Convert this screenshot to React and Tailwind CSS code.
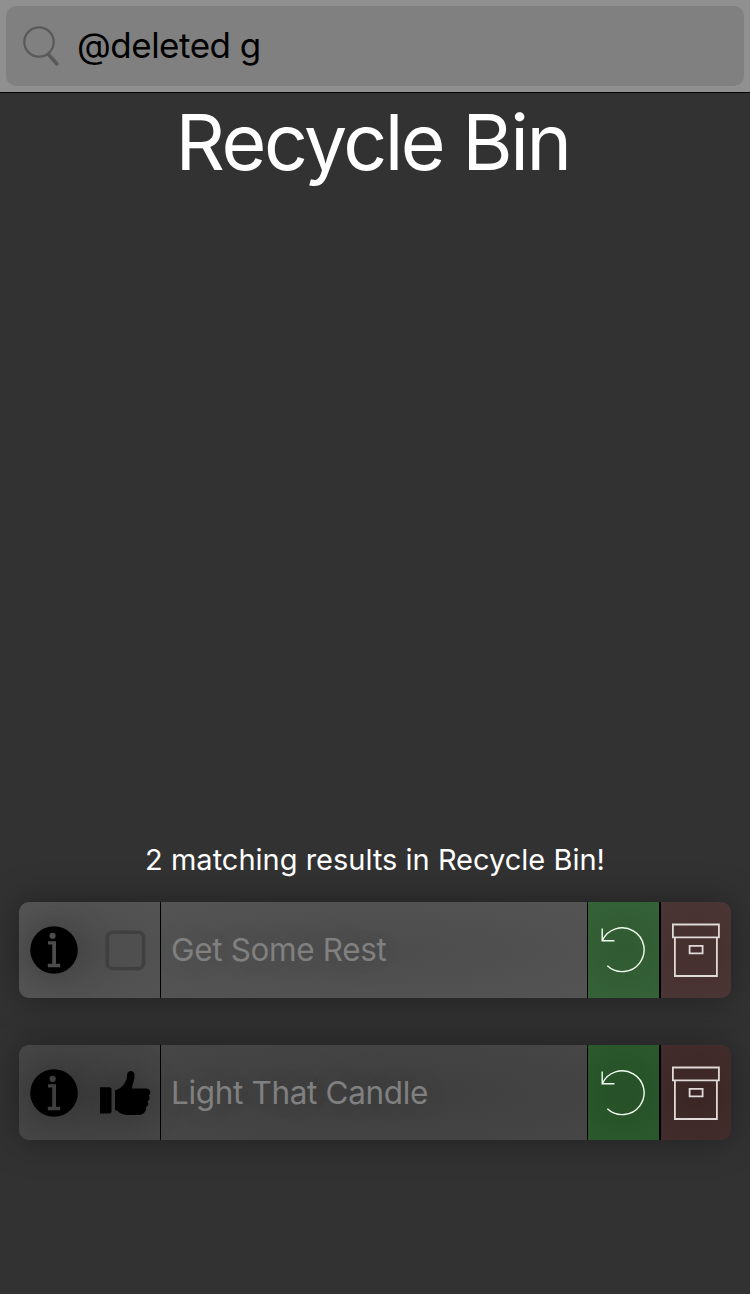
import React from "react";

function SearchIcon() {
  return (
    <svg width="40" height="44" viewBox="0 0 40 44" fill="none" stroke="#595959" strokeLinecap="round">
      <circle cx="17" cy="18" r="14.7" strokeWidth="2.2" />
      <path d="M26.500 30.500 35 40" strokeWidth="3.4" />
    </svg>
  );
}

function InfoIcon({ fill }) {
  return (
    <svg width="50" height="50" viewBox="0 0 50 50" className="shrink-0 drop-shadow-[0_0_16px_rgba(0,0,0,0.25)]">
      <circle cx="25" cy="25" r="23.8" fill="#000" />
      <circle cx="23.6" cy="10.800" r="3.100" fill={fill} />
      <path d="M19 16.300H27v22.500h4.200v3.500H18.800v-3.500h4.400V19.500H19z" fill={fill} />
    </svg>
  );
}

function CheckboxIcon() {
  return (
    <svg width="42" height="42" viewBox="0 0 42 42" fill="none">
      <rect x="3.200" y="3.200" width="36.400" height="36.400" rx="5.500" stroke="#404040" strokeWidth="3.6" />
    </svg>
  );
}

function ThumbIcon() {
  return (
    <svg width="52" height="46" viewBox="0 0 52 46" className="drop-shadow-[0_0_16px_rgba(0,0,0,0.25)]">
      <path d="M1 17.2h9.5q2 0 2 2v22.3q0 2-2 2H1z" fill="#000" />
      <path
        d="M16 20.2c4.500-1 7-3.200 9.200-6.400 2.200-3.300 2.800-5.200 2.900-9.500C28.200 2.300 29.800 1 31.600 1c2.300 0 4 1.700 4 4.100 0 5.300-2.200 8.700-2.600 13.500h14c2.700 0 4.300 1.500 4.300 3.700 0 1.700-.7 2.700-1.700 3.200 1 .8 1.100 1.700.8 3.200-.3 1.500-1 2.200-2 2.700.9.900 1 1.800.7 3.200-.4 1.600-1.200 2.300-2.300 2.700.5.800.4 1.700-.1 3-1 2.700-3 4.600-6.700 4.600H27.500c-4 0-6.500-1.500-8.500-3.600-.8-.8-1.800-1.200-3-1.400z"
        fill="#000"
      />
    </svg>
  );
}

function RestoreIcon() {
  return (
    <svg width="46" height="48" viewBox="0 0 46 48" fill="none" stroke="#f2fff2" strokeWidth="1.4">
      <path d="M2.200 2.600V14.800H14.400M2.200 14.800A21.900 21.900 0 1 1 7.300 39.800" />
    </svg>
  );
}

function ArchiveIcon() {
  return (
    <svg width="50" height="56" viewBox="0 0 50 56" fill="none" stroke="#dfd9d8" strokeWidth="1.8">
      <path d="M1.900 2.500H47.900V15.300H1.900zM3.900 15.300H45.900V54H3.900zM18.600 23.800H31.600V31.300H18.600z" />
    </svg>
  );
}

function ResultRow({ title, done }) {
  const surface = done
    ? "bg-[radial-gradient(ellipse_at_center,#3e3e3e,#464646)]"
    : "bg-[radial-gradient(ellipse_at_center,#4c4c4c,#545454)]";
  const green = done
    ? "bg-[radial-gradient(circle_at_center,#265027,#2b592d)]"
    : "bg-[radial-gradient(circle_at_center,#305a31,#366238)]";
  const red = done
    ? "bg-[radial-gradient(circle_at_center,#3a2525,#432c2c)]"
    : "bg-[radial-gradient(circle_at_center,#442e2e,#4c3535)]";
  return (
    <li className={`flex w-[712px] overflow-hidden rounded-[10px] shadow-[0_0_36px_rgba(0,0,0,0.35)] ${done ? "h-[95px]" : "h-24"}`}>
      <div className={`flex w-[142px] shrink-0 items-center border-r border-black pl-[10px] ${surface}`}>
        <InfoIcon fill={done ? "#3f3f3f" : "#4c4c4c"} />
        <span className={done ? "ml-5" : "ml-[25px]"}>{done ? <ThumbIcon /> : <CheckboxIcon />}</span>
      </div>
      <div className={`flex w-[427px] shrink-0 items-center border-r border-black pl-[10px] text-[31.5px] whitespace-nowrap text-[#808080] ${surface}`}>
        <span className={`[text-shadow:0_0_36px_rgba(0,0,0,0.13)] ${done ? "tracking-[-0.350px]" : "tracking-[-0.350px]"}`}>{title}</span>
      </div>
      <button className={`flex w-[73px] shrink-0 items-center border-r-2 border-black pl-3 ${green}`} aria-label="Restore">
        <RestoreIcon />
      </button>
      <button className={`flex w-[70px] shrink-0 items-center pl-[10px] ${red}`} aria-label="Archive">
        <ArchiveIcon />
      </button>
    </li>
  );
}

export default function App() {
  return (
    <div className="flex h-[1294px] w-[750px] flex-col bg-[#323232] font-['Inter','Liberation_Sans',sans-serif]">
      <header className="h-[93px] shrink-0 border-b border-black bg-[#909090] p-1.5">
        <div className="flex h-20 items-center rounded-[10px] bg-[#808080] pl-4">
          <SearchIcon />
          <span className="ml-[15px] pb-[2px] text-[35px] leading-none tracking-[-0.5px] whitespace-pre">@deleted g</span>
        </div>
      </header>
      <main className="flex flex-1 flex-col items-center">
        <h1 className="mt-[9px] h-20 pr-[5px] text-[77px] leading-[80px] tracking-[-2.500px] whitespace-nowrap text-white">Recycle Bin</h1>
        <p className="mt-[658px] h-10 text-[29px] leading-10 whitespace-nowrap text-white">
          2 matching results in Recycle Bin!
        </p>
        <ul className="mt-[22px] flex flex-col gap-[47px]">
          <ResultRow title="Get Some Rest" done={false} />
          <ResultRow title="Light That Candle" done={true} />
        </ul>
      </main>
    </div>
  );
}
